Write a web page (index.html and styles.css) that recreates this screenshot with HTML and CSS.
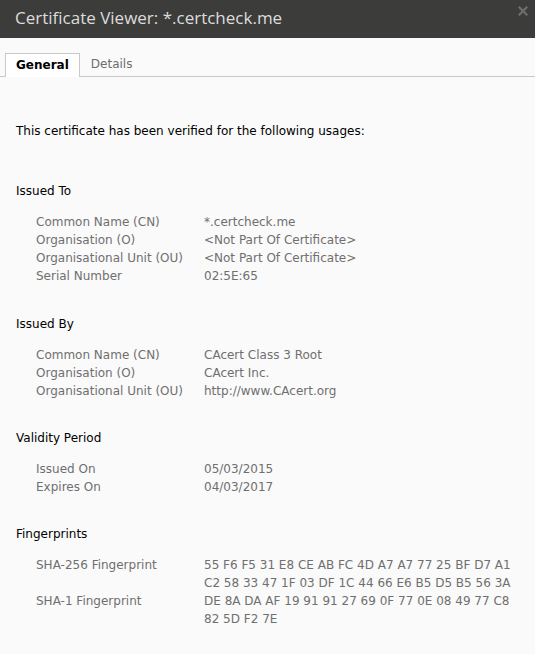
FILE: index.html
```html
<!DOCTYPE html>
<html>
<head>
<meta charset="utf-8">
<link rel="stylesheet" href="styles.css">
</head>
<body>
<div class="titlebar">
  <span class="title">Certificate Viewer: *.certcheck.me</span>
  <span class="close">
    <svg width="10" height="10" viewBox="0 0 10 10"><path d="M1.5 1.5 L8.5 8.5 M8.5 1.5 L1.5 8.5" stroke="#6e6e6e" stroke-width="2.2" stroke-linecap="square"/></svg>
  </span>
</div>
<div class="tabs">
  <div class="tab active">General</div>
  <div class="tab">Details</div>
</div>
<div class="content">
  <p class="intro">This certificate has been verified for the following usages:</p>

  <div class="section first">
    <div class="heading">Issued To</div>
    <div class="grid">
      <div class="label">Common Name (CN)</div><div class="value">*.certcheck.me</div>
      <div class="label">Organisation (O)</div><div class="value">&lt;Not Part Of Certificate&gt;</div>
      <div class="label">Organisational Unit (OU)</div><div class="value">&lt;Not Part Of Certificate&gt;</div>
      <div class="label">Serial Number</div><div class="value">02:5E:65</div>
    </div>
  </div>

  <div class="section">
    <div class="heading">Issued By</div>
    <div class="grid">
      <div class="label">Common Name (CN)</div><div class="value">CAcert Class 3 Root</div>
      <div class="label">Organisation (O)</div><div class="value">CAcert Inc.</div>
      <div class="label">Organisational Unit (OU)</div><div class="value">http://www.CAcert.org</div>
    </div>
  </div>

  <div class="section">
    <div class="heading">Validity Period</div>
    <div class="grid">
      <div class="label">Issued On</div><div class="value">05/03/2015</div>
      <div class="label">Expires On</div><div class="value">04/03/2017</div>
    </div>
  </div>

  <div class="section">
    <div class="heading">Fingerprints</div>
    <div class="grid">
      <div class="label">SHA-256 Fingerprint</div><div class="value">55 F6 F5 31 E8 CE AB FC 4D A7 A7 77 25 BF D7 A1<br>C2 58 33 47 1F 03 DF 1C 44 66 E6 B5 D5 B5 56 3A</div>
      <div class="label">SHA-1 Fingerprint</div><div class="value">DE 8A DA AF 19 91 91 27 69 0F 77 0E 08 49 77 C8<br>82 5D F2 7E</div>
    </div>
  </div>
</div>
</body>
</html>
```

FILE: styles.css
```css
html, body {
  margin: 0;
  padding: 0;
  background: #fafafa;
  font-family: "DejaVu Sans", sans-serif;
  font-size: 12px;
  color: #1a1a1a;
}
.titlebar {
  height: 38px;
  background: #3c3c3b;
  display: flex;
  align-items: center;
  justify-content: space-between;
  padding: 0 0 0 15px;
}
.title {
  color: #dcdcdc;
  font-family: "Open Sans", "DejaVu Sans", sans-serif;
  font-size: 17px;
  margin-top: -4px;
}
.close {
  align-self: flex-start;
  margin: 6px 7px 0 0;
  display: flex;
}
.tabs {
  display: flex;
  margin-top: 15px;
  padding-left: 5px;
  border-bottom: 1px solid #c9c9c9;
  height: 23px;
}
.tab {
  padding: 0 11px;
  line-height: 23px;
  color: #6d6d6d;
}
.tab.active {
  font-weight: bold;
  color: #000;
  background: #ffffff;
  border: 1px solid #c9c9c9;
  border-bottom: none;
  height: 23px;
  line-height: 23px;
  padding: 0 10px;
}
.content {
  padding: 0 16px;
}
.intro {
  margin: 45px 0 42px;
  line-height: 18px;
  color: #000;
}
.section {
  margin-bottom: 29px;
}
.section.first {
  margin-bottom: 30px;
}
.heading {
  line-height: 18px;
  color: #000;
  margin-bottom: 13px;
}
.grid {
  display: grid;
  grid-template-columns: 168px 1fr;
  padding-left: 20px;
  line-height: 18px;
  color: #6f6f6f;
}
```
